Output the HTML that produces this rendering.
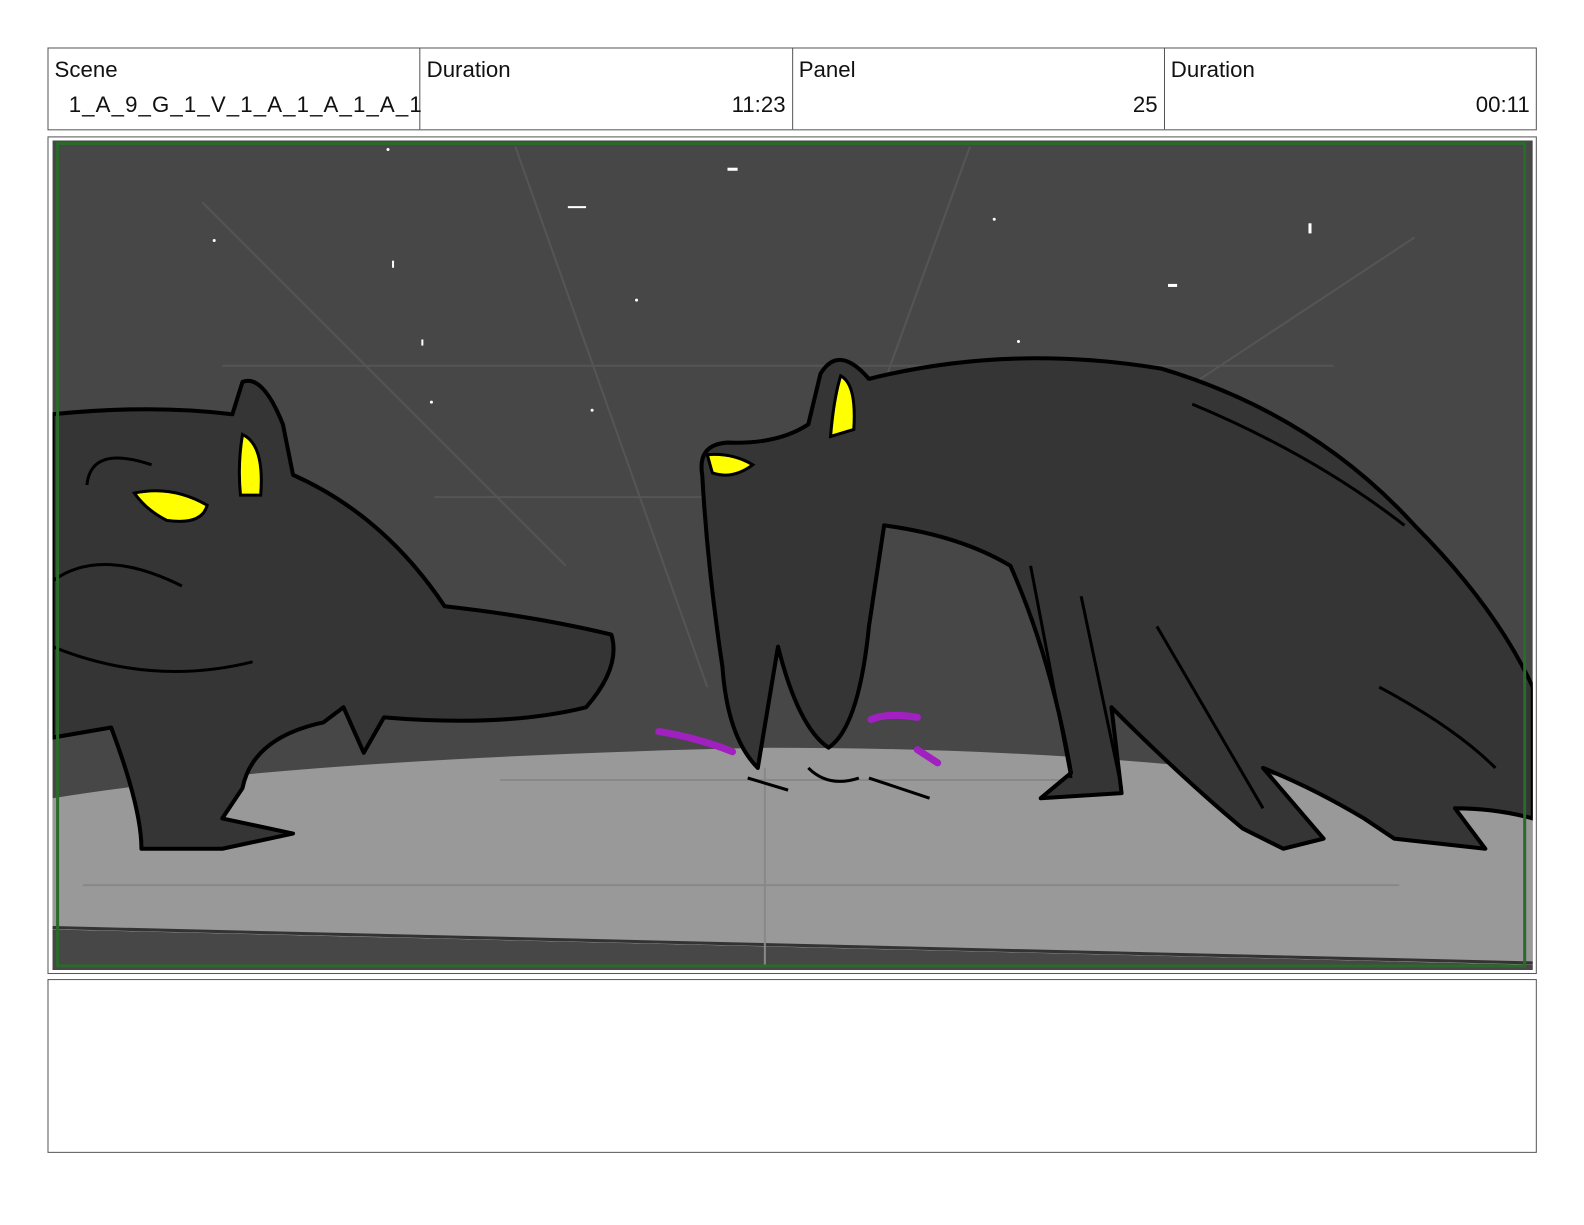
<!DOCTYPE html>
<html><head><meta charset="utf-8"><style>
html,body{margin:0;padding:0;background:#fff;width:1584px;height:1224px;overflow:hidden}
#w{position:absolute;left:0;top:0;width:1568px;height:1212px;transform:scale(1.0104);transform-origin:0 0;font-family:"Liberation Sans",sans-serif;color:#111}
.hdr{position:absolute;left:47px;top:47px;width:1474px;height:82px;border:1px solid #555;box-sizing:border-box;display:flex}
.c{flex:1;border-right:1px solid #555;position:relative}
.c:last-child{border-right:none}
.l{position:absolute;left:6px;top:8px;font-size:22px}
.v{position:absolute;right:6px;top:43px;font-size:22px}
.frame{position:absolute;left:47px;top:135px;width:1474px;height:829px;border:1px solid #555;box-sizing:border-box}
.notes{position:absolute;left:47px;top:969px;width:1474px;height:172px;border:1px solid #555;box-sizing:border-box}
svg{position:absolute;left:52px;top:139px}
</style></head><body><div id="w">
<div class="hdr">
<div class="c"><div class="l">Scene</div><div class="v" style="left:20px;right:auto;letter-spacing:1.1px">1_A_9_G_1_V_1_A_1_A_1_A_1</div></div>
<div class="c"><div class="l">Duration</div><div class="v">11:23</div></div>
<div class="c"><div class="l">Panel</div><div class="v">25</div></div>
<div class="c"><div class="l">Duration</div><div class="v">00:11</div></div>
</div>
<div class="frame"></div>
<svg width="1465" height="821" viewBox="52 139 1465 821">
<rect x="52" y="139" width="1465" height="821" fill="#474747"/>
<g stroke="#555" stroke-width="2" fill="none">
<line x1="200" y1="200" x2="560" y2="560"/><line x1="510" y1="145" x2="700" y2="680"/>
<line x1="960" y1="145" x2="860" y2="420"/><line x1="1400" y1="235" x2="1150" y2="400"/>
<line x1="220" y1="362" x2="1320" y2="362"/><line x1="430" y1="492" x2="760" y2="492"/>
</g>
<path d="M52 790 Q300 750 760 740 Q1200 740 1517 810 L1517 955 L52 920 Z" fill="#999"/>
<path d="M52 920 L1517 955 L1517 960 L52 960 Z" fill="#474747"/>
<path d="M52 918 L1517 953" stroke="#333" stroke-width="3"/>
<g stroke="#888" stroke-width="2" fill="none"><line x1="82" y1="876" x2="1385" y2="876"/><line x1="757" y1="760" x2="757" y2="955"/><line x1="495" y1="772" x2="1060" y2="772"/></g>
<g fill="#fff"><circle cx="384" cy="148" r="1.5"/><circle cx="212" cy="238" r="1.5"/><circle cx="630" cy="297" r="1.5"/><circle cx="984" cy="217" r="1.5"/><circle cx="1008" cy="338" r="1.5"/><circle cx="586" cy="406" r="1.5"/><circle cx="427" cy="398" r="1.5"/><rect x="720" y="166" width="10" height="3"/><rect x="562" y="204" width="18" height="2"/><rect x="388" y="258" width="2" height="7"/><rect x="1156" y="281" width="9" height="3"/><rect x="417" y="336" width="2" height="6"/><rect x="1295" y="221" width="3" height="10"/></g>
<g fill="#353535" stroke="#000" stroke-width="4" stroke-linejoin="round">
<path d="M52 410 Q150 400 230 410 L240 378 Q260 370 280 420 L290 470 Q380 510 440 600 Q530 610 605 628 Q615 660 580 700 Q500 720 380 710 L360 745 L340 700 L320 715 Q250 730 240 780 L220 810 L290 825 L220 840 L140 840 Q140 800 110 720 L52 730 Z"/>
<path d="M860 375 Q1000 340 1150 365 Q1300 410 1400 520 Q1480 600 1517 680 L1517 810 Q1480 800 1440 800 L1470 840 L1380 830 L1350 810 Q1300 780 1250 760 L1310 830 L1270 840 L1230 820 Q1170 770 1100 700 L1110 785 L1030 790 L1060 765 Q1040 650 1000 560 Q950 530 875 520 L860 620 Q850 720 820 740 Q790 720 770 640 L750 760 Q720 730 715 660 Q700 560 695 470 Q690 440 720 438 Q770 440 800 420 L812 370 Q830 340 860 375 Z"/>
</g>
<g fill="#ff0" stroke="#000" stroke-width="3">
<path d="M240 430 Q262 440 258 490 L238 490 Q235 460 240 430Z"/><path d="M133 488 Q170 480 205 500 Q200 520 165 515 Q145 505 133 488Z"/>
<path d="M832 372 Q848 380 845 425 L822 432 Q825 395 832 372Z"/><path d="M700 450 Q725 448 745 460 Q725 475 705 468Z"/>
</g>
<g stroke="#000" stroke-width="3" fill="none"><path d="M86 480 Q90 440 150 460"/><path d="M52 575 Q100 540 180 580"/><path d="M52 640 Q150 680 250 655"/><path d="M740 770 L780 782 M800 760 Q820 780 850 770 M860 770 L920 790"/><path d="M1180 400 Q1300 450 1390 520"/><path d="M1020 560 L1060 770 M1070 590 L1110 780 M1145 620 L1250 800 M1365 680 Q1440 720 1480 760"/></g>
<g stroke="#a020c0" stroke-width="7" stroke-linecap="round" fill="none"><path d="M652 724 Q690 730 725 744"/><path d="M862 712 Q880 705 908 710"/><path d="M908 742 L928 755"/></g>
<rect x="57" y="142" width="1452" height="814" fill="none" stroke="#2a6a2a" stroke-width="3"/>
</svg>
<div class="notes"></div>
</div></body></html>
